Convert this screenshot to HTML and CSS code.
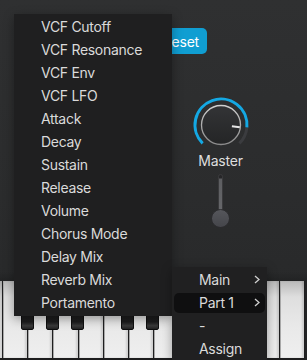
FILE: index.html
```html
<!DOCTYPE html>
<html>
<head>
<meta charset="utf-8">
<link rel="stylesheet" href="styles.css">
</head>
<body>
<div class="app">
  <div class="toprow">
    <button class="reset">Reset</button>
  </div>
  <div class="knobcol">
    <svg class="knob" width="64" height="56" viewBox="0 0 64 56">
      <defs>
        <linearGradient id="kf" x1="0" y1="0" x2="0" y2="1">
          <stop offset="0" stop-color="#333436"/>
          <stop offset="1" stop-color="#242526"/>
        </linearGradient>
        <linearGradient id="ks" x1="0" y1="0" x2="0" y2="1">
          <stop offset="0" stop-color="#d0d0d0"/>
          <stop offset="1" stop-color="#8a8a8a"/>
        </linearGradient>
      </defs>
      <path d="M57.90 34.27 A26 26 0 0 1 50.38 50.38" fill="none" stroke="#3b3c3f" stroke-width="3"/>
      <path d="M13.62 50.38 A26 26 0 1 1 57.90 34.27" fill="none" stroke="#14a8e3" stroke-width="3"/>
      <circle cx="32" cy="32" r="19.5" fill="url(#kf)" stroke="url(#ks)" stroke-width="1.3"/>
      <line x1="42.9" y1="33.3" x2="50.8" y2="34.3" stroke="#e6e6e6" stroke-width="2"/>
    </svg>
    <div class="label">Master</div>
    <div class="slider">
      <div class="track"></div>
      <div class="thumb"></div>
    </div>
  </div>
  <div class="keybed">
    <div class="keys">
      <div class="wk"></div>
      <div class="wk b"></div>
      <div class="wk b"></div>
      <div class="wk b"></div>
      <div class="wk"></div>
      <div class="wk b"></div>
      <div class="wk b"></div>
      <div class="wk"></div>
      <div class="wk b"></div>
      <div class="wk b"></div>
      <div class="wk b"></div>
      <div class="wk"></div>
      <div class="wk"></div>
    </div>
  </div>

  <div class="menu main">
    <div class="item">VCF Cutoff</div>
    <div class="item">VCF Resonance</div>
    <div class="item">VCF Env</div>
    <div class="item">VCF LFO</div>
    <div class="item">Attack</div>
    <div class="item">Decay</div>
    <div class="item">Sustain</div>
    <div class="item">Release</div>
    <div class="item">Volume</div>
    <div class="item">Chorus Mode</div>
    <div class="item">Delay Mix</div>
    <div class="item">Reverb Mix</div>
    <div class="item">Portamento</div>
  </div>

  <div class="menu sub">
    <div class="item"><span>Main</span><svg class="chev" width="6" height="9" viewBox="0 0 6 9"><polyline points="1,1 5,4.5 1,8" fill="none" stroke="#cfcfcf" stroke-width="1.3"/></svg></div>
    <div class="item active"><span>Part 1</span><svg class="chev" width="6" height="9" viewBox="0 0 6 9"><polyline points="1,1 5,4.5 1,8" fill="none" stroke="#cfcfcf" stroke-width="1.3"/></svg></div>
    <div class="item"><span>-</span></div>
    <div class="item"><span>Assign</span></div>
  </div>
</div>
</body>
</html>
```
FILE: styles.css
```css
* { box-sizing: border-box; }
html, body {
  margin: 0;
  padding: 0;
}
body {
  width: 307px;
  height: 360px;
  overflow: hidden;
  background: linear-gradient(180deg, #2f3031 0%, #2b2c2d 55%, #262728 100%);
  font-family: Inter, "Noto Sans", sans-serif;
}
.app {
  position: relative;
  width: 307px;
  height: 360px;
  display: flex;
  flex-direction: column;
}
.toprow {
  width: 207px;
  padding-top: 28px;
  display: flex;
  justify-content: flex-end;
}
.reset {
  height: 26px;
  padding: 0 8px;
  border: none;
  border-radius: 5px;
  background: #109ed2;
  color: #ffffff;
  font-family: Inter, sans-serif;
  font-size: 14px;
  letter-spacing: -0.2px;
}
.knobcol {
  margin-left: 188.5px;
  margin-top: 38.5px;
  width: 64px;
  display: flex;
  flex-direction: column;
  align-items: center;
}
.knob { display: block; }
.label {
  margin-top: 3px;
  font-size: 14px;
  line-height: 17px;
  color: #dedede;
  letter-spacing: -0.2px;
}
.slider {
  margin-top: 5px;
  display: flex;
  flex-direction: column;
  align-items: center;
}
.track {
  width: 5px;
  height: 45px;
  border-radius: 2.5px;
  background: linear-gradient(180deg, #262628 0, #262628 3px, #5d5e61 4px, #68696c 100%);
  border: 1px solid #3a3a3c;
}
.thumb {
  width: 19px;
  height: 19px;
  margin-top: -9.5px;
  border-radius: 50%;
  background: linear-gradient(180deg, #55565b, #45464b);
  border: 1px solid #2c2c2f;
}
.keybed {
  margin-top: auto;
  height: 88px;
  padding-top: 9px;
  padding-right: 2px;
  background: linear-gradient(180deg, rgba(30,31,32,0) 0, #222324 9px);
  overflow: hidden;
}
.keys {
  margin-left: -22px;
  height: 79px;
  display: flex;
  border-bottom: 2px solid #1d1d1e;
}
.wk {
  position: relative;
  flex: 1 1 0;
  height: 77px;
  border-right: 1.5px solid #1f1f20;
  background: linear-gradient(180deg, #b9b9b9 0, #dedede 16px, #e9e9e9 60%, #efefef 100%);
  box-shadow: inset 1px 0 0 #a8a8a8, inset -2px 0 2px rgba(0,0,0,0.12);
}
.wk.b::after {
  content: "";
  position: absolute;
  top: 0;
  right: -6.25px;
  width: 11px;
  height: 47px;
  border-radius: 0 0 2px 2px;
  background: linear-gradient(180deg, #161617 0, #1c1c1d 85%, #3a3a3b 93%, #222223 100%);
  border: 1px solid #0e0e0f;
  z-index: 1;
}
.menu {
  position: absolute;
  z-index: 10;
  background: #1f1f20;
  box-shadow: 0 3px 10px rgba(0,0,0,0.35);
  color: #dadada;
  font-size: 14px;
  letter-spacing: -0.3px;
}
.menu.main {
  left: 14px;
  top: 14px;
  width: 158px;
  padding: 1px 0 2px;
}
.menu.sub {
  left: 172px;
  top: 267px;
  width: 95px;
  padding: 1px 0 0;
  background: #202021;
}
.item {
  height: 23px;
  line-height: 23px;
  padding-left: 27px;
  padding-right: 7px;
  display: flex;
  align-items: center;
  justify-content: space-between;
  white-space: nowrap;
}
.item.active {
  margin: 1.5px 2px;
  height: 20px;
  line-height: 20px;
  padding-left: 25px;
  padding-right: 5px;
  border-radius: 5px;
  background: #0f0f10;
}
.chev { display: block; }
```
